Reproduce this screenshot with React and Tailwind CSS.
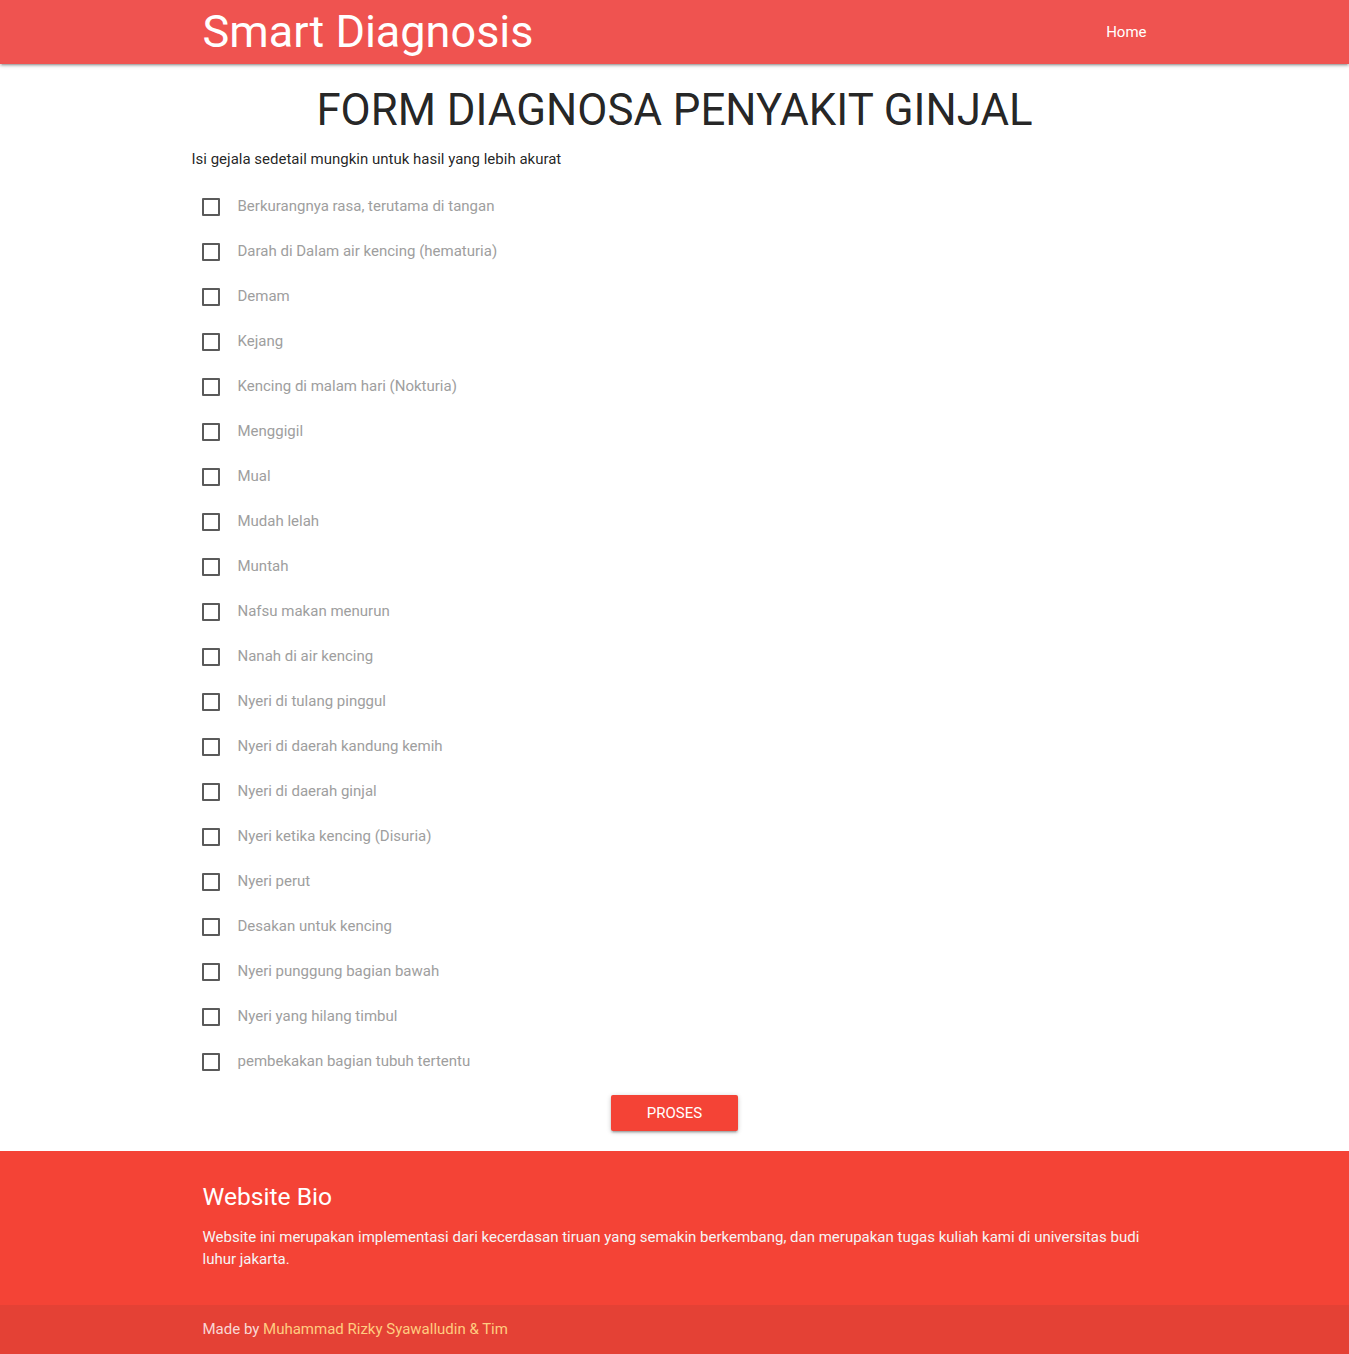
import React from "react";

const symptoms = [
  "Berkurangnya rasa, terutama di tangan",
  "Darah di Dalam air kencing (hematuria)",
  "Demam",
  "Kejang",
  "Kencing di malam hari (Nokturia)",
  "Menggigil",
  "Mual",
  "Mudah lelah",
  "Muntah",
  "Nafsu makan menurun",
  "Nanah di air kencing",
  "Nyeri di tulang pinggul",
  "Nyeri di daerah kandung kemih",
  "Nyeri di daerah ginjal",
  "Nyeri ketika kencing (Disuria)",
  "Nyeri perut",
  "Desakan untuk kencing",
  "Nyeri punggung bagian bawah",
  "Nyeri yang hilang timbul",
  "pembekakan bagian tubuh tertentu",
];

export default function App() {
  return (
    <div className="min-h-screen bg-white font-['Roboto',sans-serif] text-[rgba(0,0,0,0.87)]">
      <nav className="h-16 bg-[#ef5350] shadow-[0_2px_2px_0_rgba(0,0,0,0.14),0_3px_1px_-2px_rgba(0,0,0,0.12),0_1px_5px_0_rgba(0,0,0,0.2)] relative z-10">
        <div className="w-[944px] mx-auto h-full flex items-center justify-between">
          <a className="text-white text-[45px] leading-none pb-px">Smart Diagnosis</a>
          <a className="text-white text-[15px]">Home</a>
        </div>
      </nav>

      <main className="w-[944px] mx-auto pt-[22px]">
        <h3 className="text-center text-[43.8px] leading-[48px] text-[rgba(0,0,0,0.87)]">
          FORM DIAGNOSA PENYAKIT GINJAL
        </h3>
        <p className="-ml-[11px] text-[15px] leading-[22px] mt-[14px]">
          Isi gejala sedetail mungkin untuk hasil yang lebih akurat
        </p>
        <div className="flex flex-col mt-[14px]">
          {symptoms.map((s) => (
            <label key={s} className="h-[45px] flex items-center cursor-pointer">
              <span className="w-[18px] h-[18px] border-2 border-[#5a5a5a] rounded-[1px] -ml-px"></span>
              <span className="ml-[18px] text-[15px] text-[#9e9e9e]">{s}</span>
            </label>
          ))}
        </div>
        <div className="flex justify-center mt-[11px] mb-5">
          <button className="h-9 w-[127px] bg-[#f44336] text-white text-[15px] uppercase rounded-[2px] shadow-[0_2px_2px_0_rgba(0,0,0,0.14),0_3px_1px_-2px_rgba(0,0,0,0.12),0_1px_5px_0_rgba(0,0,0,0.2)]">
            Proses
          </button>
        </div>
      </main>

      <footer className="bg-[#f44336] text-white">
        <div className="w-[944px] mx-auto pt-[30px] pb-[35px]">
          <h5 className="text-[24.6px] leading-[32px] text-white">Website Bio</h5>
          <p className="mt-[13px] text-[15px] leading-[22px] text-[#f5f5f5]">
            Website ini merupakan implementasi dari kecerdasan tiruan yang semakin berkembang, dan merupakan tugas kuliah kami di universitas budi luhur jakarta.
          </p>
        </div>
        <div className="bg-[rgba(51,51,51,0.08)] h-[49px]">
          <div className="w-[944px] mx-auto h-full flex items-center text-[15px] text-[rgba(255,255,255,0.8)]">
            Made by&nbsp;<a className="text-[#ffcc80]">Muhammad Rizky Syawalludin &amp; Tim</a>
          </div>
        </div>
      </footer>
    </div>
  );
}
